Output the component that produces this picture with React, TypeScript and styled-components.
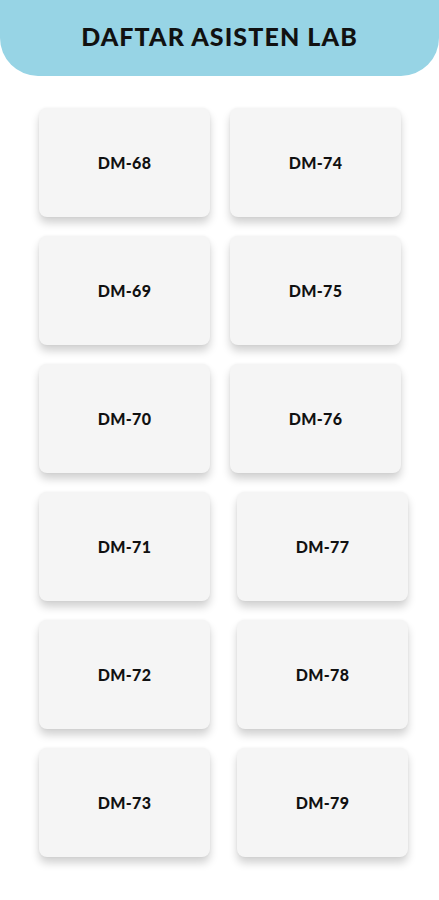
import React from "react";
import styled, { createGlobalStyle } from "styled-components";

const GlobalStyle = createGlobalStyle`
  body {
    margin: 0;
    background: #ffffff;
    font-family: "Lato", "Open Sans", sans-serif;
  }
`;

const Page = styled.div`
  width: 439px;
  min-height: 900px;
  background: #ffffff;
`;

const Header = styled.header`
  height: 76px;
  background-color: #97d4e5;
  border-radius: 0 0 38px 38px;
  display: flex;
  align-items: center;
  justify-content: center;
`;

const Title = styled.h1`
  margin: 0 0 4px;
  font-size: 25px;
  font-weight: 900;
  letter-spacing: 1.1px;
  color: #111111;
`;

const Sections = styled.div`
  display: flex;
  flex-direction: column;
  gap: 19px;
  padding: 32px 0 0 39px;
`;

const CardGrid = styled.div<{ $colGap: number }>`
  display: grid;
  grid-template-columns: 171px 171px;
  column-gap: ${(p) => p.$colGap}px;
  row-gap: 19px;
`;

const Card = styled.div`
  height: 109px;
  background-color: #f5f5f5;
  border-radius: 8px;
  box-shadow: 0 6px 8px rgba(0, 0, 0, 0.18), 0 0 3px rgba(0, 0, 0, 0.05);
  display: flex;
  align-items: center;
  justify-content: center;
`;

const CardLabel = styled.span`
  font-size: 16px;
  font-weight: 900;
  letter-spacing: 0.3px;
  color: #111111;
`;

const upper = ["68", "74", "69", "75", "70", "76"];
const lower = ["71", "77", "72", "78", "73", "79"];

export default function App() {
  return (
    <Page>
      <GlobalStyle />
      <Header>
        <Title>DAFTAR ASISTEN LAB</Title>
      </Header>
      <Sections>
        <CardGrid $colGap={20}>
          {upper.map((n) => (
            <Card key={n}>
              <CardLabel>DM-{n}</CardLabel>
            </Card>
          ))}
        </CardGrid>
        <CardGrid $colGap={27}>
          {lower.map((n) => (
            <Card key={n}>
              <CardLabel>DM-{n}</CardLabel>
            </Card>
          ))}
        </CardGrid>
      </Sections>
    </Page>
  );
}
